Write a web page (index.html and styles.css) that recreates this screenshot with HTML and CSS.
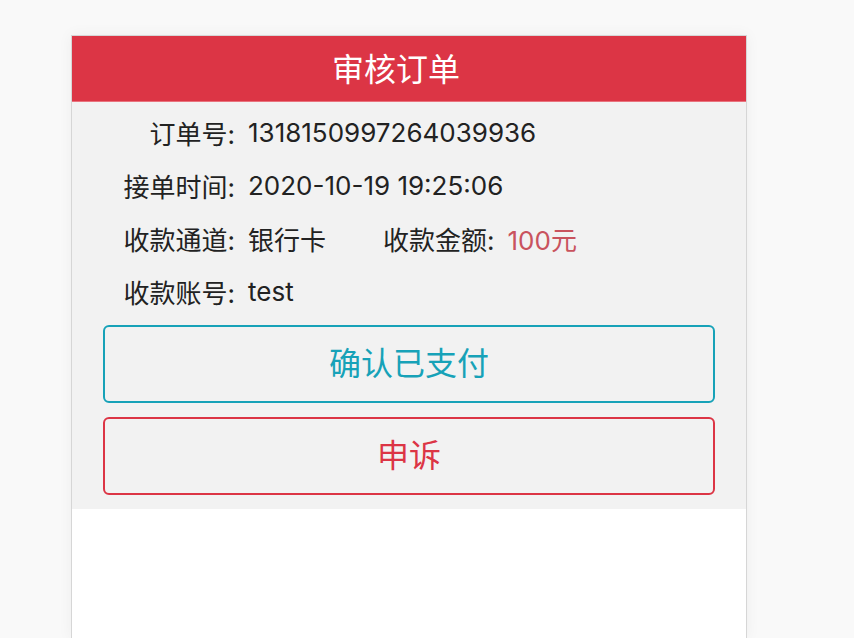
FILE: index.html
```html
<!DOCTYPE html>
<html lang="zh">
<head>
<meta charset="utf-8">
<title>审核订单</title>
<link rel="stylesheet" href="styles.css">
</head>
<body>
<div class="panel">
  <div class="header">审核订单</div>
  <div class="content">
    <div class="row"><span class="label">订单号:</span><span class="value">1318150997264039936</span></div>
    <div class="row"><span class="label">接单时间:</span><span class="value">2020-10-19 19:25:06</span></div>
    <div class="row"><span class="label">收款通道:</span><span class="value short">银行卡</span><span class="label2">收款金额:</span><span class="value amount">100元</span></div>
    <div class="row"><span class="label">收款账号:</span><span class="value">test</span></div>
    <div class="actions">
      <button class="btn btn-info">确认已支付</button>
      <button class="btn btn-danger">申诉</button>
    </div>
  </div>
</div>
</body>
</html>
```
FILE: styles.css
```css
html, body {
  margin: 0;
  padding: 0;
  background: #f9f9f9;
  font-family: Inter, "Noto Sans CJK SC", sans-serif;
  color: #222;
}
.panel {
  margin: 35px 0 0 71px;
  width: 674px;
  height: 603px;
  background: #fff;
  border: 1px solid #d6d6d6;
  border-bottom: none;
  box-shadow: 0 0 14px rgba(0, 0, 0, 0.05);
}
.header {
  height: 66px;
  box-sizing: border-box;
  background: #dc3545;
  border-bottom: 1px solid #e9737e;
  color: #fff;
  font-size: 32px;
  display: flex;
  align-items: center;
  justify-content: center;
  padding: 0 26px 3px 0;
}
.content {
  background: #f2f2f2;
  padding: 6px 31px 14px;
}
.row {
  height: 53px;
  display: flex;
  align-items: center;
  font-size: 26px;
  margin: 0 -31px;
  padding-bottom: 4px;
  box-sizing: border-box;
}
.label {
  width: 163px;
  text-align: right;
  flex: none;
}
.value {
  margin-left: 13px;
}
.value.short {
  width: 135px;
  flex: none;
}
.label2 {
  flex: none;
}
.value.amount {
  color: #c9535e;
}
.actions {
  display: flex;
  flex-direction: column;
  gap: 14px;
  margin-top: 5px;
}
.btn {
  height: 78px;
  border-radius: 6px;
  background: transparent;
  font-family: inherit;
  font-size: 32px;
  padding: 0 0 6px;
  cursor: pointer;
}
.btn-info {
  border: 2px solid #17a2b8;
  color: #17a2b8;
}
.btn-danger {
  border: 2px solid #dc3545;
  color: #dc3545;
}
```
